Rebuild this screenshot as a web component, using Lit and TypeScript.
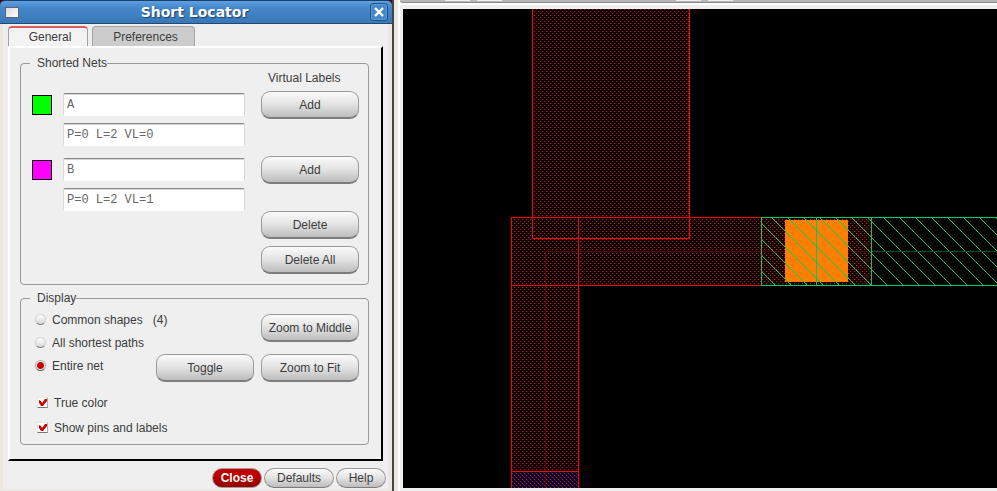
import { LitElement, html, css, svg } from "lit";
import { customElement, property } from "lit/decorators.js";

@customElement("push-button")
class PushButton extends LitElement {
  @property() label = "";
  @property({ reflect: true }) variant = "";

  static styles = css`
    :host {
      display: block;
    }
    .button {
      display: block;
      box-sizing: border-box;
      width: 100%;
      height: 28px;
      margin: 0;
      padding: 0;
      border: 1px solid #9a9a9a;
      border-bottom: 2px solid #7c7c7c;
      border-radius: 9px;
      background: linear-gradient(#fbfbfb, #e2e2e2 50%, #bdbdbd);
      color: #3c3c3c;
      font: 12px/14px "Liberation Sans", Arial, sans-serif;
      white-space: nowrap;
    }
    :host([variant="small"]) .button,
    :host([variant="primary"]) .button {
      height: 20px;
      border-bottom-width: 1px;
      border-radius: 10px;
    }
    :host([variant="primary"]) .button {
      border-color: #a89a9a;
      background: linear-gradient(#c60000, #b80000 50%, #8c0000);
      color: #ffffff;
      font-weight: bold;
    }
  `;

  render() {
    return html`<button class="button" type="button">${this.label}</button>`;
  }
}

/* One staircase diagonal across a square tile. */
const diagonal = (size: number) =>
  Array.from({ length: size }, (_, i) => `M${i} ${i}h1v1h-1z`).join("");

@customElement("layout-canvas")
class LayoutCanvas extends LitElement {
  static styles = css`
    :host {
      display: block;
      position: relative;
      background: #000000;
      overflow: hidden;
    }
    .drawing {
      position: absolute;
      inset: 0;
      width: 100%;
      height: 100%;
    }
    .red {
      fill: #ff0000;
    }
    .dim-red {
      fill: #5a0000;
    }
    .blue {
      fill: #0000ff;
    }
    .green {
      fill: #00cc66;
    }
    .dim-green {
      fill: #004d26;
    }
    .via {
      fill: #ff8000;
    }
  `;

  render() {
    return html`<svg class="drawing" shape-rendering="crispEdges" role="img" aria-label="Layout view">
      ${svg`
      <defs>
        <pattern id="dots" width="4" height="4" patternUnits="userSpaceOnUse">
          <path class="red" d="M1 0h1v1h-1zM3 2h1v1h-1z" />
        </pattern>
        <pattern id="hatch" width="16" height="16" patternUnits="userSpaceOnUse">
          <path class="green" d=${diagonal(16)} />
        </pattern>
        <pattern id="dense" width="4" height="4" patternUnits="userSpaceOnUse">
          <path class="blue" d="M2 1h1v1h-1zM0 3h1v1h-1z" />
        </pattern>
      </defs>
      <rect x="109" y="463" width="66" height="100%" fill="url(#dense)" />
      <rect x="129" y="0" width="158" height="230" fill="url(#dots)" />
      <rect x="108" y="208" width="361" height="69" fill="url(#dots)" />
      <rect x="108" y="277" width="68" height="100%" fill="url(#dots)" />
      <rect class="dim-red" x="142" y="242" width="326" height="1" />
      <rect class="dim-red" x="142" y="242" width="1" height="100%" />
      <rect class="red" x="129" y="0" width="1" height="230" />
      <rect class="red" x="286" y="0" width="1" height="230" />
      <rect class="red" x="129" y="229" width="158" height="1" />
      <rect class="red" x="108" y="208" width="251" height="1" />
      <rect class="red" x="108" y="276" width="251" height="1" />
      <rect class="red" x="108" y="208" width="1" height="100%" />
      <rect class="red" x="175" y="208" width="1" height="100%" />
      <rect class="red" x="108" y="462" width="68" height="1" />
      <rect class="via" x="382" y="211" width="63" height="62" />
      <rect x="358" y="208" width="100%" height="69" fill="url(#hatch)" />
      <rect class="dim-green" x="469" y="242" width="100%" height="1" />
      <rect class="green" x="358" y="208" width="100%" height="1" />
      <rect class="green" x="358" y="276" width="100%" height="1" />
      <rect class="green" x="358" y="208" width="1" height="69" />
      <rect class="green" x="413" y="208" width="1" height="69" />
      <rect class="green" x="468" y="208" width="1" height="69" />`}
    </svg>`;
  }
}

@customElement("short-locator")
class ShortLocator extends LitElement {
  nets = [
    { name: "A", info: "P=0 L=2 VL=0", swatch: "swatch lime" },
    { name: "B", info: "P=0 L=2 VL=1", swatch: "swatch magenta" },
  ];

  static styles = css`
    :host {
      display: flex;
      flex-direction: column;
      color: #3c3c3c;
      font: 12px/14px "Liberation Sans", Arial, sans-serif;
      background: #4a0508;
    }
    .titlebar {
      display: flex;
      align-items: center;
      box-sizing: border-box;
      height: 24px;
      padding: 0 4px 0 5px;
      border-top: 1px solid #1d3f66;
      border-bottom: 1px solid #224a77;
      border-radius: 5px 5px 0 0;
      background: linear-gradient(#5fa0e2, #4489cc 30%, #3a78b6);
    }
    .menu {
      box-sizing: border-box;
      width: 14px;
      height: 11px;
      padding: 0;
      border: 1px solid #5d6670;
      background: linear-gradient(135deg, #d8d8d8, #ffffff);
    }
    .title {
      flex: 1;
      margin: 0;
      color: #ffffff;
      text-align: center;
      text-shadow: 1px 1px 1px #1c3f68;
      font: bold 14px/18px "DejaVu Sans", sans-serif;
    }
    .close {
      display: grid;
      place-items: center;
      box-sizing: border-box;
      width: 18px;
      height: 18px;
      padding: 0;
      border: 1px solid #22507f;
      border-radius: 3px;
      background: #4488cc;
      box-shadow: inset 0 0 0 1px #5b9bdc;
    }
    .body {
      flex: 1;
      padding: 2px 5px 1px;
      border: solid #ece8e0;
      border-width: 0 4px 2px 3px;
      background: #efefef;
    }
    .tabs {
      display: flex;
      gap: 4px;
    }
    .tab {
      box-sizing: border-box;
      width: 103px;
      height: 20px;
      padding: 0 0 0 4px;
      border: 1px solid #a3a3a3;
      border-bottom: 0;
      border-radius: 4px 4px 0 0;
      background: #cccccc;
      color: #3c3c3c;
      font: 12px/14px "Liberation Sans", Arial, sans-serif;
    }
    .tab.active {
      width: 80px;
      border-top: 2px solid #d66060;
      background: #f3f3f3;
    }
    .panel {
      display: flex;
      flex-direction: column;
      gap: 6px;
      padding: 8px 12px 14px 10px;
      border: 2px solid #ffffff;
      border-right: 2px solid #000000;
      border-bottom-color: #000000;
    }
    .group {
      min-width: 0;
      margin: 0;
      padding: 1px 9px 10px;
      border: 1px solid #999999;
      border-radius: 4px;
    }
    .legend {
      height: 14px;
      padding: 0 0 0 7px;
    }
    .caption {
      width: 98px;
      margin: 0 0 6px auto;
      text-indent: 7px;
    }
    .nets {
      display: grid;
      gap: 10px;
      padding-left: 2px;
    }
    .net {
      display: grid;
      grid-template-columns: 20px minmax(0, 1fr) 98px;
      grid-template-rows: 28px 23px;
      row-gap: 4px;
    }
    .swatch {
      box-sizing: border-box;
      height: 20px;
      margin-top: 4px;
      border: 1px solid #000000;
    }
    .lime {
      background: #00ff00;
    }
    .magenta {
      background: #ff00ff;
    }
    .field {
      box-sizing: border-box;
      width: calc(100% - 27px);
      height: 23px;
      margin: 0 16px 0 11px;
      padding: 0 3px;
      border: 1px solid #dadada;
      border-top: 1px solid #888888;
      border-bottom-color: #ffffff;
      border-radius: 2px;
      background: #ffffff;
      box-shadow: inset 0 1px 0 #d5d5d5;
      color: #666666;
      font: 12px/14px "Liberation Mono", monospace;
    }
    .name {
      margin-top: 2px;
    }
    .info {
      grid-column: 2;
    }
    .deletes {
      display: grid;
      gap: 7px;
      width: 98px;
      margin-left: auto;
    }
    .display {
      padding: 3px 9px 4px;
    }
    .split {
      display: flex;
      align-items: flex-start;
    }
    .options {
      flex: 1;
      min-width: 0;
      padding-left: 5px;
    }
    .option {
      display: flex;
      align-items: center;
      gap: 6px;
      height: 23px;
      white-space: pre;
    }
    .check {
      height: 25px;
      padding-left: 2px;
    }
    .checks {
      padding-top: 13px;
    }
    .radio,
    .tick {
      appearance: none;
      flex: none;
      box-sizing: border-box;
      width: 11px;
      height: 11px;
      margin: 0;
    }
    .radio {
      border: 1px solid #d2d2d2;
      border-bottom-color: #808080;
      border-radius: 50%;
      background: linear-gradient(#ffffff, #d6d6d6);
    }
    .radio:checked {
      border-color: #b0b0b0;
      border-bottom-color: #606060;
      background: radial-gradient(circle, #cc0000 0 3px, #f4f4f4 4px);
    }
    .mark {
      display: grid;
    }
    .mark > * {
      grid-area: 1 / 1;
    }
    .tick {
      border: 1px solid #e8e8e8;
      border-right-color: #b0b0b0;
      border-bottom-color: #777777;
      background: #ffffff;
    }
    .actions {
      display: grid;
      grid-template-columns: 98px 98px;
      gap: 12px 7px;
      padding-top: 6px;
    }
    .middle {
      grid-column: 2;
    }
    .footer {
      display: flex;
      justify-content: flex-end;
      gap: 2px;
      padding-top: 7px;
      margin-right: -3px;
    }
    .small {
      width: 50px;
    }
    .wide {
      width: 70px;
    }
  `;

  radio(label: string, checked = false) {
    return html`<label class="option"
      ><input class="radio" type="radio" name="scope" ?checked=${checked} />${label}</label
    >`;
  }

  check(label: string) {
    return html`<label class="option check"
      ><span class="mark"
        ><input class="tick" type="checkbox" checked /><svg width="11" height="11" viewBox="0 0 11 11">
          <path d="M2 3L4 4L5 6L8 2L10 2L10 4L6 9L4 9L2 6Z" fill="#cc0000" /></svg></span
      >${label}</label
    >`;
  }

  render() {
    return html`
      <header class="titlebar">
        <button class="menu" type="button" aria-label="Window menu"></button>
        <h1 class="title">Short Locator</h1>
        <button class="close" type="button" aria-label="Close window">
          <svg width="10" height="10" viewBox="0 0 10 10">
            <path d="M1 1L9 9M9 1L1 9" stroke="#ffffff" stroke-width="2.4" />
          </svg>
        </button>
      </header>
      <div class="body">
        <div class="tabs" role="tablist">
          <button class="tab active" type="button" role="tab" aria-selected="true">General</button>
          <button class="tab" type="button" role="tab" aria-selected="false">Preferences</button>
        </div>
        <div class="panel">
          <fieldset class="group">
            <legend class="legend">Shorted Nets</legend>
            <div class="caption">Virtual Labels</div>
            <div class="nets">
              ${this.nets.map(
                (net) => html`<div class="net">
                  <span class=${net.swatch}></span>
                  <input class="field name" aria-label="Net name" .value=${net.name} />
                  <push-button label="Add"></push-button>
                  <input class="field info" aria-label="Net details" readonly .value=${net.info} />
                </div>`
              )}
            </div>
            <div class="deletes">
              <push-button label="Delete"></push-button>
              <push-button label="Delete All"></push-button>
            </div>
          </fieldset>
          <fieldset class="group display">
            <legend class="legend">Display</legend>
            <div class="split">
              <div class="options">
                ${this.radio("Common shapes   (4)")} ${this.radio("All shortest paths")}
                ${this.radio("Entire net", true)}
                <div class="checks">${this.check("True color")} ${this.check("Show pins and labels")}</div>
              </div>
              <div class="actions">
                <push-button class="middle" label="Zoom to Middle"></push-button>
                <push-button label="Toggle"></push-button>
                <push-button label="Zoom to Fit"></push-button>
              </div>
            </div>
          </fieldset>
        </div>
        <div class="footer">
          <push-button class="small" variant="primary" label="Close"></push-button>
          <push-button class="wide" variant="small" label="Defaults"></push-button>
          <push-button class="small" variant="small" label="Help"></push-button>
        </div>
      </div>
    `;
  }
}

@customElement("app-root")
class AppRoot extends LitElement {
  static styles = css`
    :host {
      display: flex;
      min-height: 100vh;
      background: #ece8e0;
    }
    .dialog {
      flex: 0 0 392px;
      min-width: 0;
      border-right: 2px solid #444444;
    }
    .viewer {
      flex: 1;
      display: flex;
      flex-direction: column;
      min-width: 0;
      margin-left: 4px;
      border-left: 2px solid #ffffff;
      background: #efefef;
    }
    .toolbar {
      display: flex;
      gap: 7px;
      height: 2px;
      padding-left: 45px;
      border-bottom: 1px solid #888888;
      border-bottom-left-radius: 4px;
      background: #b8b8b8;
    }
    .slot {
      width: 25px;
      height: 1px;
      background: #efefef;
    }
    .slot.apart {
      margin-left: 167px;
    }
    .canvas {
      flex: 1;
      margin: 4px 0 3px 3px;
    }
    .edge {
      height: 2px;
      background: #ffffff;
    }
  `;

  render() {
    return html`
      <short-locator class="dialog"></short-locator>
      <main class="viewer">
        <div class="toolbar">
          <span class="slot"></span><span class="slot"></span>
          <span class="slot apart"></span><span class="slot"></span>
        </div>
        <div class="edge"></div>
        <layout-canvas class="canvas"></layout-canvas>
      </main>
    `;
  }
}
